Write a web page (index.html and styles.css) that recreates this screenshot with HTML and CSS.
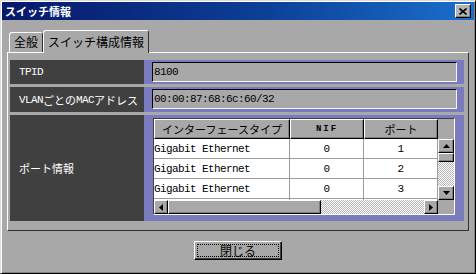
FILE: index.html
```html
<!DOCTYPE html>
<html lang="ja">
<head>
    <meta charset="UTF-8">
    <title>スイッチ情報</title>
    <link rel="stylesheet" href="styles.css">
</head>
<body>
    <div class="window">
        <div class="titlebar">
            <span class="title">スイッチ情報</span>
            <button class="title-close" type="button">
                <svg width="8" height="7" viewBox="0 0 8 7"><path d="M0.5 0.5 L7.5 6.5 M7.5 0.5 L0.5 6.5" stroke="#000" stroke-width="1.6"/></svg>
            </button>
        </div>
        <div class="content">
            <div class="tabs">
                <div class="tab tab-general">全般</div>
                <div class="tab active">スイッチ構成情報</div>
            </div>
            <div class="panel">
                <div class="row">
                    <div class="label"><span class="en">TPID</span></div>
                    <div class="value"><div class="field"><span class="en">8100</span></div></div>
                </div>
                <div class="row row-vlan">
                    <div class="label"><span class="en">VLAN</span>ごとの<span class="en">MAC</span>アドレス</div>
                    <div class="value"><div class="field"><span class="en">00:00:87:68:6c:60/32</span></div></div>
                </div>
                <div class="row row-ports">
                    <div class="label">ポート情報</div>
                    <div class="value">
                        <div class="grid">
                            <div class="th">インターフェースタイプ</div>
                            <div class="th th-nif">NIF</div>
                            <div class="th">ポート</div>
                            <div class="th-corner"></div>

                            <div class="rows">
                                <div class="tr"><div class="td name"><span class="en">Gigabit Ethernet</span></div><div class="td"><span class="en">0</span></div><div class="td"><span class="en">1</span></div></div>
                                <div class="tr"><div class="td name"><span class="en">Gigabit Ethernet</span></div><div class="td"><span class="en">0</span></div><div class="td"><span class="en">2</span></div></div>
                                <div class="tr"><div class="td name"><span class="en">Gigabit Ethernet</span></div><div class="td"><span class="en">0</span></div><div class="td"><span class="en">3</span></div></div>
                                <div class="tr tr-empty"><div class="td name"></div><div class="td"></div><div class="td"></div></div>
                            </div>
                            <div class="vscroll">
                                <div class="sb-btn"><svg width="7" height="4" viewBox="0 0 7 4"><polygon points="3.5,0 7,4 0,4" fill="#000"/></svg></div>
                                <div class="sb-thumb-v"></div>
                                <div class="sb-track"></div>
                                <div class="sb-btn"><svg width="7" height="4" viewBox="0 0 7 4"><polygon points="0,0 7,0 3.5,4" fill="#000"/></svg></div>
                            </div>

                            <div class="hscroll">
                                <div class="sb-btn sb-btn-h"><svg width="4" height="7" viewBox="0 0 4 7"><polygon points="4,0 4,7 0,3.5" fill="#000"/></svg></div>
                                <div class="sb-thumb-h"></div>
                                <div class="sb-track"></div>
                                <div class="sb-btn sb-btn-h"><svg width="4" height="7" viewBox="0 0 4 7"><polygon points="0,0 4,3.5 0,7" fill="#000"/></svg></div>
                            </div>
                            <div class="sb-corner"></div>
                        </div>
                    </div>
                </div>
            </div>
            <div class="actions">
                <button class="btn" type="button">閉じる</button>
            </div>
        </div>
    </div>
</body>
</html>
```

FILE: styles.css
```css
/* Reset */
* {
    box-sizing: border-box;
}

html, body {
    margin: 0;
    background-color: #a8a8a8;
    font-family: "Noto Sans CJK JP", sans-serif;
    font-size: 12px;
    color: #000;
}

/* Latin text in the bitmap-like half width font */
.en {
    font-family: "Liberation Mono", "DejaVu Sans Mono", monospace;
    font-size: 11px;
    letter-spacing: -0.6px;
}

/* Window frame */
.window {
    width: 476px;
    height: 274px;
    border: 1px solid;
    border-color: #dcdcdc #000 #000 #dcdcdc;
    box-shadow: inset 1px 1px #fff, inset -1px -1px #808080;
    padding: 1px;
    display: flex;
    flex-direction: column;
}

.titlebar {
    height: 18px;
    display: flex;
    align-items: center;
    justify-content: space-between;
    padding: 0 3px 0 3px;
    background: linear-gradient(90deg, #07186a, #0c3f96 55%, #1a6fcc);
}

.title {
    color: #fff;
    font-weight: bold;
    font-size: 11px;
    line-height: 18px;
}

.title-close {
    width: 16px;
    height: 14px;
    padding: 0;
    background-color: #b4b4b4;
    border: 1px solid;
    border-color: #fff #000 #000 #fff;
    box-shadow: inset -1px -1px #808080;
    display: flex;
    align-items: center;
    justify-content: center;
}

.content {
    flex: 1;
    padding: 10px 5px 0 5px;
    display: flex;
    flex-direction: column;
}

/* Tabs */
.tabs {
    display: flex;
    align-items: flex-end;
    height: 22px;
    padding-left: 2px;
    position: relative;
    z-index: 1;
}

.tab {
    height: 20px;
    border: 1px solid;
    border-bottom: none;
    border-color: #fff #303030 transparent #fff;
    border-radius: 3px 3px 0 0;
    line-height: 18px;
    text-align: center;
    background-color: #a8a8a8;
}

.tab-general {
    width: 34px;
}

.tab.active {
    width: 106px;
    height: 23px;
    margin-bottom: -1px;
    line-height: 21px;
}

/* Tab page */
.panel {
    height: 179px;
    border: 1px solid;
    border-color: #fff #303030 #303030 #fff;
    padding: 7px 4px 9px 2px;
    display: flex;
    flex-direction: column;
    gap: 3px;
}

.row {
    display: grid;
    grid-template-columns: 134px 1fr;
    height: 24px;
}

.row-vlan {
    height: 25px;
}

.row-ports {
    height: 106px;
}

.label {
    background-color: #404040;
    color: #fff;
    font-size: 11px;
    padding-left: 9px;
    display: flex;
    align-items: center;
    white-space: nowrap;
}

.value {
    background-color: #7a7abf;
    padding: 2px 7px 2px 8px;
}

.row-vlan .value {
    padding-bottom: 3px;
}

.row-ports .value {
    padding: 3px 9px 6px 9px;
}

.field {
    height: 100%;
    background-color: #a8a8a8;
    border: 1px solid;
    border-color: #000 #f4f4f4 #f4f4f4 #000;
    display: flex;
    align-items: center;
    padding-left: 1px;
}

/* Port list */
.grid {
    width: 302px;
    height: 97px;
    background-color: #a8a8a8;
    border: 1px solid;
    border-color: #404040 #fff #fff #404040;
    display: grid;
    grid-template-columns: 136px 74px 74px 16px;
    grid-template-rows: 20px 61px 14px;
}

.th {
    background-color: #a8a8a8;
    border: 1px solid;
    border-color: #fff #000 #000 #fff;
    box-shadow: inset -1px -1px #808080;
    display: flex;
    align-items: center;
    justify-content: center;
    font-size: 11px;
    white-space: nowrap;
}

.th-nif {
    font-family: "Liberation Mono", monospace;
    font-weight: bold;
    font-size: 9px;
    letter-spacing: 2px;
}

.rows {
    grid-column: 1 / 4;
    overflow: hidden;
    background-color: #fff;
}

.tr {
    display: grid;
    grid-template-columns: 136px 74px 74px;
    height: 20px;
    border-bottom: 1px solid #9c9c9c;
}

.td {
    border-right: 1px solid #9c9c9c;
    display: flex;
    align-items: center;
    justify-content: center;
    white-space: nowrap;
}

.td.name {
    justify-content: flex-start;
}

/* Scroll bars */
.sb-track {
    flex: 1;
    background: repeating-conic-gradient(#fff 0 25%, #b4b4b4 0 50%) 0 0 / 2px 2px;
}

.vscroll {
    display: flex;
    flex-direction: column;
}

.hscroll {
    grid-column: 1 / 4;
    display: flex;
}

.sb-btn,
.sb-thumb-v,
.sb-thumb-h {
    background-color: #a8a8a8;
    border: 1px solid;
    border-color: #fff #000 #000 #fff;
    box-shadow: inset -1px -1px #808080;
}

.sb-btn {
    width: 16px;
    height: 14px;
    display: flex;
    align-items: center;
    justify-content: center;
}

.sb-btn-h {
    width: 14px;
}

.sb-thumb-v {
    height: 9px;
}

.sb-thumb-h {
    width: 153px;
}

/* Bottom button */
.actions {
    display: flex;
    justify-content: center;
    padding-top: 10px;
}

.btn {
    width: 88px;
    height: 19px;
    padding: 0;
    background-color: #a8a8a8;
    border: 1px solid;
    border-color: #fff #000 #000 #fff;
    box-shadow: inset -1px -1px #404040;
    outline: 1px dotted #000;
    outline-offset: -4px;
    font-family: "Noto Sans CJK JP", sans-serif;
    font-size: 12px;
    line-height: 15px;
    color: #000;
}
```
